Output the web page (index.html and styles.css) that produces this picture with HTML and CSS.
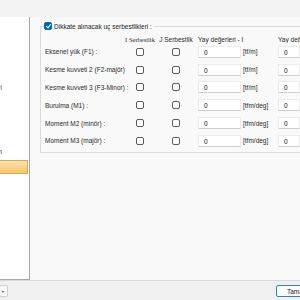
FILE: index.html
```html
<!DOCTYPE html>
<html lang="tr">
<head>
    <meta charset="UTF-8">
    <title>Uç serbestlikleri</title>
    <link rel="stylesheet" href="styles.css">
</head>
<body>
    <div class="topbar"></div>
    <div class="main">
        <div class="tree">
            <div class="tree-item tree-text first">Yükleri</div>
            <div class="tree-item tree-text second">Serbestlik ve yay değerlerim</div>
            <div class="tree-item selected"></div>
        </div>
        <div class="content">
            <div class="group">
                <div class="legend">
                    <span class="check checked"></span>
                    <span>Dikkate alınacak uç serbestlikleri :</span>
                </div>
                <div class="grid">
                    <div></div>
                    <div class="head head-serif">I Serbestlik</div>
                    <div class="head">J Serbestlik</div>
                    <div class="head head-wide">Yay değerleri - I</div>
                    <div class="head head-last">Yay değerleri - J</div>

                    <div class="label">Eksenel yük (F1) :</div>
                    <div class="cell"><span class="check"></span></div>
                    <div class="cell"><span class="check"></span></div>
                    <div class="field">0</div>
                    <div class="unit">[tf/m]</div>
                    <div class="field">0</div>

                    <div class="label">Kesme kuvveti 2 (F2-majör)</div>
                    <div class="cell"><span class="check"></span></div>
                    <div class="cell"><span class="check"></span></div>
                    <div class="field">0</div>
                    <div class="unit">[tf/m]</div>
                    <div class="field">0</div>

                    <div class="label">Kesme kuvveti 3 (F3-Minor) :</div>
                    <div class="cell"><span class="check"></span></div>
                    <div class="cell"><span class="check"></span></div>
                    <div class="field">0</div>
                    <div class="unit">[tf/m]</div>
                    <div class="field">0</div>

                    <div class="label">Burulma (M1) :</div>
                    <div class="cell"><span class="check"></span></div>
                    <div class="cell"><span class="check"></span></div>
                    <div class="field">0</div>
                    <div class="unit">[tfm/deg]</div>
                    <div class="field">0</div>

                    <div class="label">Moment M2 (minör) :</div>
                    <div class="cell"><span class="check"></span></div>
                    <div class="cell"><span class="check"></span></div>
                    <div class="field">0</div>
                    <div class="unit">[tfm/deg]</div>
                    <div class="field">0</div>

                    <div class="label">Moment M3 (majör) :</div>
                    <div class="cell"><span class="check"></span></div>
                    <div class="cell"><span class="check"></span></div>
                    <div class="field">0</div>
                    <div class="unit">[tfm/deg]</div>
                    <div class="field">0</div>
                </div>
            </div>
        </div>
    </div>
    <div class="footer">
        <button class="btn btn-small">▸</button>
        <button class="btn btn-ok">Tamam</button>
    </div>
</body>
</html>
```
FILE: styles.css
```css
body {
    margin: 0;
    width: 300px;
    height: 300px;
    overflow: hidden;
    background-color: #f0f0f0;
    font-family: 'Liberation Sans', Arial, sans-serif;
    font-size: 6.5px;
    color: #2a2a2a;
}
.topbar {
    height: 17px;
    background-color: #f3f3f3;
}
.main {
    display: flex;
    height: 263px;
    border-bottom: 1px solid #d8d8d8;
}
.tree {
    width: 28px;
    background-color: #fff;
    border-right: 1px solid #a8a8a8;
    border-bottom: 1px solid #a8a8a8;
    padding-right: 1px;
    overflow: hidden;
}
.tree-item {
    display: flex;
    justify-content: flex-end;
    white-space: nowrap;
    overflow: hidden;
}
.tree-text {
    height: 8px;
    line-height: 8px;
    padding-right: 26px;
    color: #7a2f5c;
}
.first {
    margin-top: 67px;
}
.second {
    margin-top: 56px;
    color: #5a2446;
}
.selected {
    margin-top: 4px;
    height: 12px;
    border: 1px solid #e2a74c;
    border-left: none;
    background: linear-gradient(#fde2ad, #f9c46d);
}
.content {
    flex: 1;
    min-width: 0;
    background-color: #f9f9f9;
    padding: 9px 0 0 10px;
}
.group {
    position: relative;
    border: 1px solid #dcdcdc;
    border-right: none;
    padding: 4px 0 2px 4px;
}
.legend {
    position: absolute;
    top: -5px;
    left: 3px;
    display: flex;
    align-items: center;
    gap: 2px;
    padding-right: 2px;
    background-color: #f9f9f9;
    color: #222;
    white-space: nowrap;
}
.grid {
    display: grid;
    grid-template-columns: 77px 36px 36px 47px 37px 22px;
    grid-template-rows: 12px;
    grid-auto-rows: 17.8px;
    align-items: center;
    overflow: hidden;
}
.head {
    text-align: center;
    white-space: nowrap;
    align-self: end;
}
.head-serif {
    font-family: 'Liberation Serif', serif;
}
.head-wide {
    text-align: left;
    padding-left: 4px;
    grid-column: span 2;
}
.head-last {
    text-align: left;
    overflow: hidden;
}
.label {
    white-space: nowrap;
}
.cell {
    display: flex;
    justify-content: center;
}
.check {
    display: inline-block;
    box-sizing: border-box;
    width: 8px;
    height: 8px;
    border: 1px solid #5a5a5a;
    border-radius: 2px;
    background-color: #fff;
}
.checked {
    position: relative;
    border-color: #0067c0;
    background-color: #0067c0;
}
.checked::after {
    content: "";
    position: absolute;
    left: 1.5px;
    top: 0px;
    width: 2px;
    height: 4px;
    border: solid #fff;
    border-width: 0 1px 1px 0;
    transform: rotate(40deg);
}
.field {
    box-sizing: border-box;
    height: 12px;
    line-height: 11px;
    padding-left: 5px;
    background-color: #fff;
    border: 1px solid #ececec;
    border-bottom-color: #cfcfcf;
    color: #111;
}
.cell + .field {
    margin-left: 4px;
}
.unit {
    padding-left: 2px;
}
.footer {
    display: flex;
    justify-content: space-between;
    padding-top: 4px;
}
.btn {
    height: 12px;
    padding: 0;
    font-family: 'Liberation Sans', Arial, sans-serif;
    font-size: 6.5px;
    background-color: #fdfdfd;
    border: 1px solid #d0d0d0;
    border-radius: 2px;
    color: #222;
}
.btn-small {
    width: 9px;
    margin-left: -1px;
    font-size: 5px;
    color: #777;
}
.btn-ok {
    width: 40px;
    margin-right: -16px;
    text-align: left;
    padding-left: 10px;
    border-color: #2b7fd4;
}
```
